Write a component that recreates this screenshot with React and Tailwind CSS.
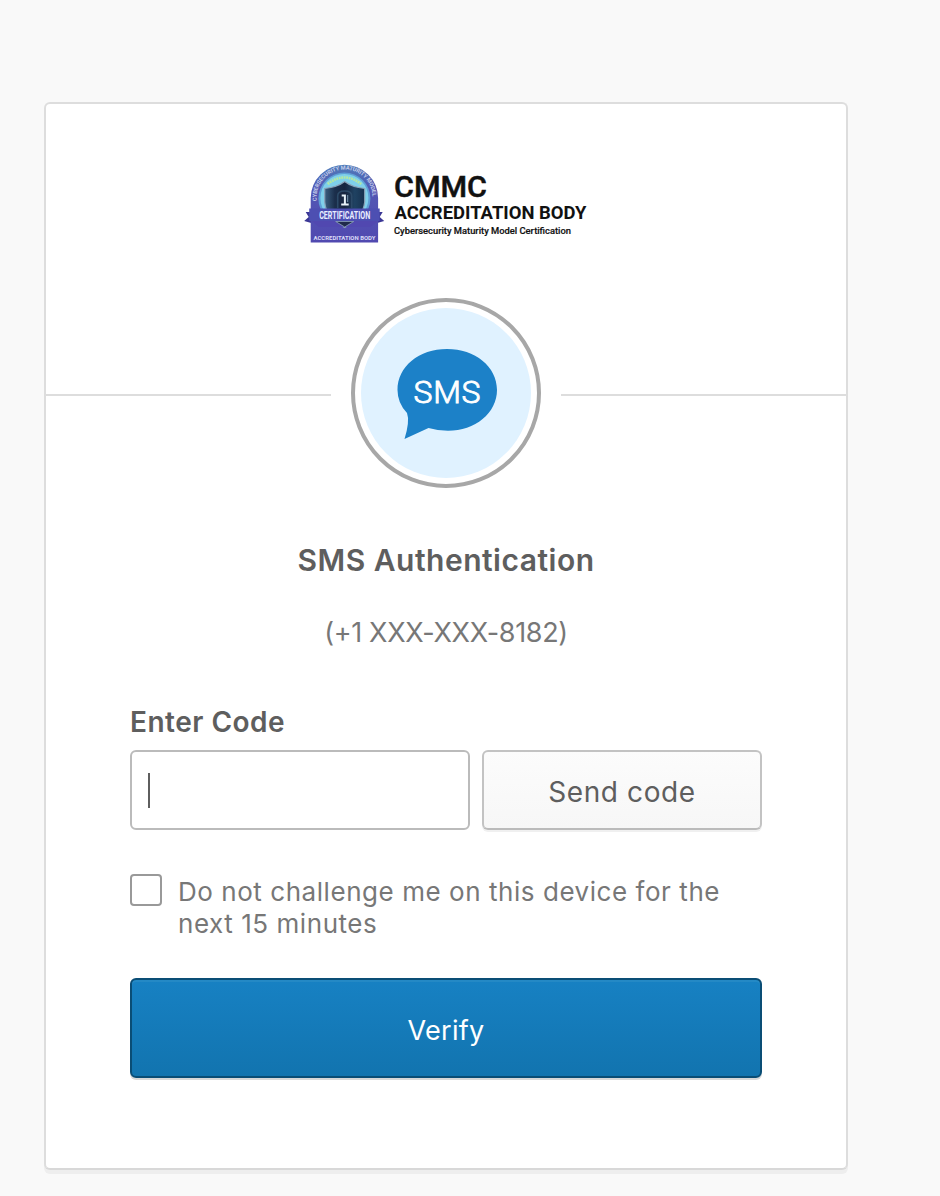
function Badge() {
  return (
    <svg width="80" height="80" viewBox="0 0 80 80" className="shrink-0 overflow-visible" fontFamily="Roboto, sans-serif">
      <defs>
        <linearGradient id="ring" x1="0" y1="0" x2="0" y2="1">
          <stop offset="0" stopColor="#4f7db8" />
          <stop offset="0.3" stopColor="#5258b4" />
          <stop offset="1" stopColor="#5149b0" />
        </linearGradient>
        <linearGradient id="shield" x1="0" y1="0" x2="1" y2="0">
          <stop offset="0" stopColor="#3b5f80" />
          <stop offset="0.25" stopColor="#1b2f4c" />
          <stop offset="0.5" stopColor="#17253f" />
          <stop offset="0.75" stopColor="#1f4262" />
          <stop offset="1" stopColor="#17314f" />
        </linearGradient>
        <path id="arcOuter" d="M12.200 38A28 28 0 1 1 67.500 38" />
      </defs>
      <g transform="translate(0.700 0)">
        <path d="M-0.500 57l4.500-4-3-5h9V60z M79.500 57l-4.500-4 3-5h-9V60z" fill="#3b3795" />
        <path d="M6 78.500V34a33.700 33.200 0 0 1 67.400 0V78.500z" fill="url(#ring)" />
        <circle cx="39.700" cy="34.500" r="26" fill="#5f9fd6" />
        <circle cx="39.700" cy="34" r="24" fill="#7fd0ea" />
        <text fontSize="5.600" fontWeight="700" fill="#c3cbea">
          <textPath href="#arcOuter" startOffset="1" textLength="90" lengthAdjust="spacing">CYBERSECURITY MATURITY MODEL</textPath>
        </text>
        <path d="M23 20Q39.700 7 56.500 20" fill="none" stroke="#b4e8a2" strokeWidth="2.600" strokeDasharray="1.800 0.700" />
        <path d="M40 17.500Q47 23 60 24.500V38Q58 55 40 63.500Q21.500 55 20 38V24.500Q33 23 40 17.500z" fill="url(#shield)" stroke="#8ba3b8" strokeWidth="1.200" />
        <path d="M33 44V32q0-5 7-5t7 5v12" fill="none" stroke="#2c4a68" strokeWidth="1.600" />
        <path d="M37 31.500h3.200v9M36.500 40.500h7.500" fill="none" stroke="#e6f1f8" strokeWidth="2" />
        <path d="M43 31v7" fill="none" stroke="#7c9bb4" strokeWidth="1" />
        <path d="M7 57h66l-7 6H14z" fill="#5148b0" />
        <path d="M31 57.500h18l-9 5.500z" fill="#202a4b" stroke="#8ba3b8" strokeWidth="0.800" />
        <path d="M4.500 44.500h70.500V57H4.500z" fill="#4d4fb2" />
        <text x="40" y="54.600" fontSize="10.800" fontWeight="700" fill="#e9edff" textAnchor="middle" textLength="51" lengthAdjust="spacingAndGlyphs">CERTIFICATION</text>
        <text x="39.800" y="75.500" fontSize="5.800" fontWeight="700" fill="#dadcf7" textAnchor="middle" textLength="62" lengthAdjust="spacingAndGlyphs">ACCREDITATION BODY</text>
      </g>
    </svg>
  );
}

function Logo() {
  return (
    <div className="flex h-20 items-start justify-center gap-[10px] pr-px">
      <Badge />
      <svg width="193" height="80" viewBox="0 0 193 80" className="shrink-0 overflow-visible" fontFamily="Roboto, sans-serif" fill="#111">
        <text x="0" y="33" fontSize="30" fontWeight="500" stroke="#111" strokeWidth="0.500" textLength="93" lengthAdjust="spacingAndGlyphs">CMMC</text>
        <text x="0.500" y="54.500" fontSize="18.500" fontWeight="700" textLength="192" lengthAdjust="spacingAndGlyphs">ACCREDITATION BODY</text>
        <text x="0" y="70" fontSize="9.800" fontWeight="500" stroke="#111" strokeWidth="0.200" textLength="177" lengthAdjust="spacingAndGlyphs">Cybersecurity Maturity Model Certification</text>
      </svg>
    </div>
  );
}

function SmsIcon() {
  return (
    <div className="mx-5 flex h-[190px] w-[190px] shrink-0 items-center justify-center rounded-full border-4 border-[#a7a7a7]">
      <svg width="170" height="170" viewBox="0 0 170 170">
        <circle cx="85" cy="85" r="85" fill="#e0f2ff" />
        <path d="M86 41C114 41 136 58.500 136 82C136 105 114 122.800 87 122.800Q77 122.800 67.500 120L43.500 131Q49 113 46 105Q36.500 95 36.500 82C36.500 58.500 58 41 86 41Z" fill="#1c81c8" />
        <text x="52.500" y="94.500" fontFamily="Roboto, sans-serif" fontSize="32" fontWeight="300" stroke="#fff" strokeWidth="0.900" fill="#fff" textLength="67" lengthAdjust="spacing">SMS</text>
      </svg>
    </div>
  );
}

export default function App() {
  return (
    <main className="h-[1196px] w-[940px] overflow-hidden bg-[#f9f9f9] pt-[102px] pl-11 font-[Inter,sans-serif] text-[#5e5e5e]">
      <section className="flex h-[1068px] w-[804px] flex-col rounded-md border-2 border-[#dddddd] border-b-[#d8d8d8] bg-white pt-[60px] shadow-[0_4px_0_#eeeeee]">
        <Logo />
        <div className="mt-[54px] flex items-center">
          <div className="mt-1 h-0.5 flex-1 bg-[#dddddd]" />
          <SmsIcon />
          <div className="mt-1 h-0.5 flex-1 bg-[#dddddd]" />
        </div>
        <form className="flex flex-col px-[84px] pt-[52px]">
          <h1 className="text-center text-[30px] leading-10 font-semibold tracking-[0.5px] whitespace-nowrap">SMS Authentication</h1>
          <p className="mt-[33px] text-center text-[27px] leading-10 tracking-[-0.35px] whitespace-nowrap text-[#777777]">(+1 XXX-XXX-8182)</p>
          <label className="mt-[49px] text-[28px] leading-10 font-semibold tracking-[0.5px]">Enter Code</label>
          <div className="mt-2 flex gap-3">
            <div className="flex h-20 w-[340px] items-center rounded-md border-2 border-[#bbbbbb] bg-white pl-4">
              <span className="h-[35px] w-0.5 bg-[#5e5e5e]" />
            </div>
            <button type="button" className="h-20 w-[280px] rounded-md border-2 border-[#c3c3c3] border-b-[#bbbbbb] bg-linear-to-b from-[#fcfcfc] to-[#f7f7f7] pt-[3px] text-[28px] tracking-[0.6px] shadow-[0_2px_0_#f0f0f0]">Send code</button>
          </div>
          <div className="mt-11 flex items-start gap-4">
            <span className="h-8 w-8 shrink-0 rounded border-2 border-[#999999] bg-white" />
            <p className="mt-0.5 text-[26px] leading-8 tracking-[0.55px] whitespace-nowrap text-[#777777]">
              Do not challenge me on this device for the<br />next 15 minutes
            </p>
          </div>
          <button type="button" className="mt-[38px] h-[100px] rounded-md border-2 border-[#0a4d75] bg-linear-to-b from-[#1781c3] to-[#1274af] pt-[6px] text-[27px] tracking-[0.3px] text-white shadow-[inset_0_2px_0_#2489c5,0_2px_0_#d8d8d8]">Verify</button>
        </form>
      </section>
    </main>
  );
}
